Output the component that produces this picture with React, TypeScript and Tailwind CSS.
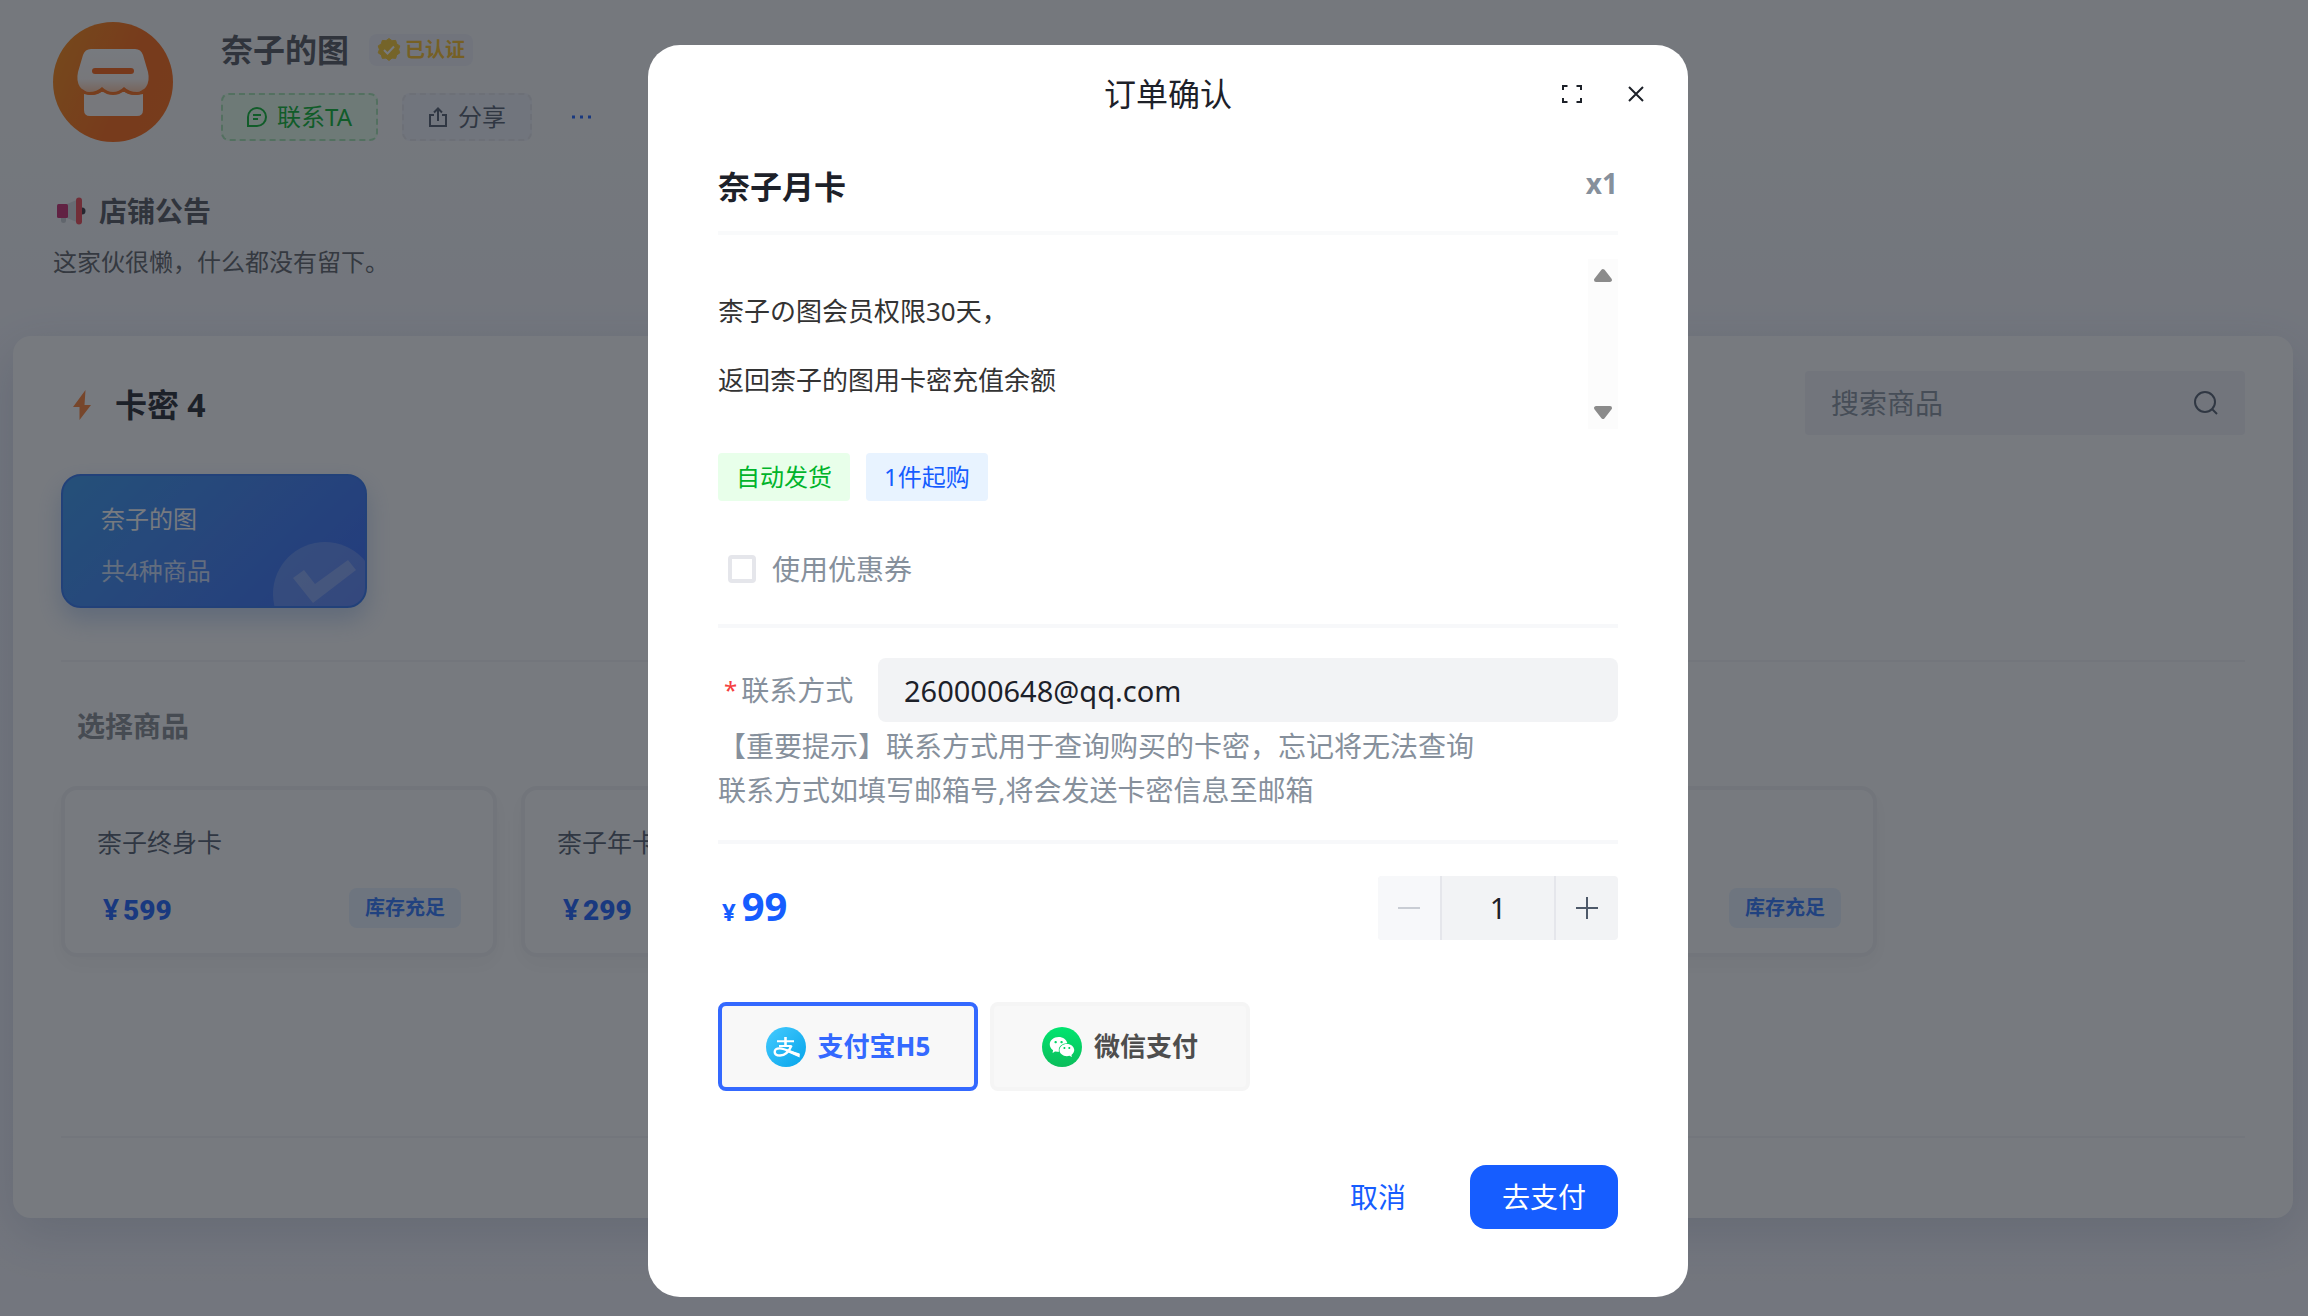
import { useState } from 'react'
import { AiFillWechat } from 'react-icons/ai'

interface Product {
  id: number
  name: string
  price: number
}

const PRODUCTS: Product[] = [
  { id: 1, name: '柰子终身卡', price: 599 },
  { id: 2, name: '柰子年卡', price: 299 },
  { id: 3, name: '柰子季卡', price: 199 },
  { id: 4, name: '柰子月卡', price: 99 },
]

const UNIT_PRICE = 99

function ShopLogo() {
  return (
    <svg viewBox="0 0 120 120" className="h-30 w-30 shrink-0" aria-hidden="true">
      <defs>
        <linearGradient id="logo-bg" x1="0" y1="0.3" x2="1" y2="0.7">
          <stop offset="0" stopColor="#fc8208" />
          <stop offset="0.6" stopColor="#ff6208" />
          <stop offset="1" stopColor="#ff6408" />
        </linearGradient>
        <linearGradient id="logo-roof" x1="0" y1="0" x2="0" y2="1">
          <stop offset="0" stopColor="#ffffff" />
          <stop offset="0.7" stopColor="#fff8f4" />
          <stop offset="1" stopColor="#ffc9a6" />
        </linearGradient>
      </defs>
      <circle cx="60" cy="60" r="60" fill="url(#logo-bg)" />
      <path d="M38 27h44q6 0 8 6l5 17q2 9-2 15-4 5-9 5-8 0-13-5-5 5-11 5t-11-5q-5 5-13 5-5 0-9-5-4-6-2-15l5-17q2-6 8-6z" fill="url(#logo-roof)" />
      <path d="M31 72q11 3 18-3 11 6 22 0 7 6 19 3v16q0 6-6 6H37q-6 0-6-6z" fill="#fffaf7" />
      <path d="M29 68q4 4 9 4 7 0 11-4 5 4 11 4t11-4q4 4 11 4 5 0 9-4" fill="none" stroke="#ff6a10" strokeWidth="2" />
      <rect x="39" y="46" width="42" height="6" rx="3" fill="#ff5d08" />
    </svg>
  )
}

function Megaphone() {
  return (
    <svg viewBox="0 0 30 28" className="h-7 w-[30px]" aria-hidden="true">
      <path d="M4 18h5v6q0 2-2.500 2T4 24z" fill="#c9ccd3" />
      <circle cx="25" cy="14" r="3.500" fill="#35303a" />
      <path d="M10 7l12-5v24l-12-5z" fill="#d8dade" />
      <rect x="0" y="7" width="11" height="14" rx="1.500" fill="#c9246a" />
      <rect x="19" y="0.500" width="6" height="27" rx="3" fill="#f0434f" />
    </svg>
  )
}

function AlipayLogo() {
  return (
    <svg viewBox="0 0 40 40" className="h-10 w-10" aria-hidden="true">
      <defs>
        <linearGradient id="alipay-bg" x1="0" y1="0" x2="1" y2="1">
          <stop offset="0" stopColor="#45cbff" />
          <stop offset="1" stopColor="#06a4ea" />
        </linearGradient>
      </defs>
      <circle cx="20" cy="20" r="20" fill="url(#alipay-bg)" />
      <g fill="none" stroke="#fff" strokeWidth="2">
        <path d="M11 14.200h17M13 19h12.500" />
        <path d="M19.500 10v9" strokeWidth="2.600" />
        <path d="M25.500 18.500c-2.500 6-7 10-11.500 10-3.500 0-5.300-1.500-5.300-3.500 0-2.300 2.300-3.600 5-3.600 5 0 11 3.900 19.600 7" strokeWidth="2.400" />
      </g>
      <path d="M21 22.500l12.600 4.100v4l-14-6.300z" fill="#fff" />
    </svg>
  )
}

function WechatLogo() {
  return (
    <span className="flex h-10 w-10 items-center justify-center rounded-full bg-linear-to-b from-[#00e56f] to-[#0bbd5b] text-white">
      <AiFillWechat className="h-7 w-7" />
    </span>
  )
}

function ShopHeader() {
  return (
    <header className="pl-[53px] pt-[22px]">
      <div className="flex gap-12">
        <ShopLogo />
        <div>
          <div className="flex h-14 items-center gap-5">
            <h1 className="text-[32px] font-bold leading-12 text-[#4e5159]">奈子的图</h1>
            <span className="flex h-8 items-center gap-1 rounded-lg bg-[#eff0f8] px-2 text-xl font-bold leading-8 text-[#fcbe1c]">
              <svg viewBox="0 0 24 24" className="h-6 w-6" aria-hidden="true">
                <path d="M12 0.500l3 2.200 3.700-.3 1 3.500 3.100 2-1.200 3.500 1.200 3.500-3.100 2-1 3.500-3.700-.3-3 2.400-3-2.400-3.700.3-1-3.500-3.100-2 1.200-3.500L1.200 7.900l3.100-2 1-3.500 3.700.3z" fill="#fbc82a" stroke="#fbc82a" strokeLinejoin="round" />
                <path d="M7 12l3.500 3.500L17 8.500" fill="none" stroke="#fff" strokeWidth="2" />
              </svg>
              已认证
            </span>
          </div>
          <div className="mt-[15px] flex items-center">
            <button type="button" className="flex h-12 items-center gap-2.5 rounded-lg border-2 border-dashed border-[#a6e5b1] bg-[#e8ffea] px-6 text-2xl text-[#00b42a]">
              <svg viewBox="0 0 20 20" className="h-5 w-5" fill="none" stroke="currentColor" strokeWidth="2" aria-hidden="true">
                <path d="M1 19v-9a9 9 0 1 1 9 9zM6 8h8M6 12h5" />
              </svg>
              联系TA
            </button>
            <button type="button" className="ml-6 flex h-12 items-center gap-2.5 rounded-lg border-2 border-dashed border-[#e5e6eb] bg-[#f1f2f9] px-6 text-2xl text-[#4e5969]">
              <svg viewBox="0 0 20 20" className="h-5 w-5" fill="none" stroke="currentColor" strokeWidth="2" aria-hidden="true">
                <path d="M6 8H2v11h16V8h-4M10 14V1.500M6 5.500l4-4 4 4" />
              </svg>
              分享
            </button>
            <button type="button" aria-label="更多" className="ml-10 text-[#165dff]">
              <svg viewBox="0 0 20 4" className="h-1 w-5" fill="currentColor" aria-hidden="true">
                <path d="M0 .500h3v3H0zM8 .500h3v3H8zM16 .500h3v3h-3z" />
              </svg>
            </button>
          </div>
        </div>
      </div>
      <h2 className="mt-12 flex h-[42px] items-center gap-3 pl-1 text-[28px] font-bold text-[#4e5159]">
        <Megaphone />
        店铺公告
      </h2>
      <p className="mt-3 text-2xl leading-9 text-[#5a5d63]">这家伙很懒，什么都没有留下。</p>
    </header>
  )
}

function ProductCard({ product }: { product: Product }) {
  return (
    <article className="w-[436px] rounded-2xl border-4 border-[#f2f3f5] bg-white px-8 pb-[25px] pt-[34px] shadow-[0_8px_20px_rgba(0,0,0,0.04)]">
      <h3 className="text-[25px] leading-9 text-[#4e5969]">{product.name}</h3>
      <div className="mt-7 flex h-10 items-center justify-between">
        <p className="flex items-baseline gap-1 pl-1.5 pt-1 font-bold text-[#165dff]">
          <span className="text-[28px] leading-10">¥</span>
          <span className="font-['Roboto',sans-serif] text-[28px] font-black">{product.price}</span>
        </p>
        <span className="rounded-lg bg-[#e8f3ff] px-4 text-xl font-bold leading-10 text-[#2a74ff]">库存充足</span>
      </div>
    </article>
  )
}

function Shop() {
  return (
    <main className="ml-[13px] mr-[15px] mt-14 rounded-[18px] bg-white px-12 pb-20 pt-[35px] shadow-[0_16px_50px_rgba(40,60,110,0.16)]">
      <div className="flex h-16 items-center justify-between">
        <h2 className="flex items-center gap-6 pl-3 pt-1 text-[32px] font-bold text-[#1d2129]">
          <svg viewBox="0 0 18 30" className="h-[30px] w-[18px]" aria-hidden="true">
            <path d="M12.500 0L0 17h6.500v13L18 15h-6.500z" fill="#ff7d2e" />
          </svg>
          卡密 4
        </h2>
        <form role="search" className="flex h-16 w-[440px] items-center rounded bg-[#f2f3f8] px-[26px]" onSubmit={e => e.preventDefault()}>
          <input type="text" aria-label="搜索商品" placeholder="搜索商品" className="min-w-0 flex-1 bg-transparent text-[28px] outline-none placeholder:text-[#86909c]" />
          <button type="submit" aria-label="搜索" className="text-[#4e5969]">
            <svg viewBox="0 0 26 26" className="h-[26px] w-[26px]" fill="none" stroke="currentColor" strokeWidth="2" aria-hidden="true">
              <circle cx="12" cy="12" r="10" />
              <path d="M19 19l5 5" />
            </svg>
          </button>
        </form>
      </div>

      <button type="button" className="relative mt-[39px] block h-[134px] w-[306px] overflow-hidden rounded-[20px] border-2 border-[#2b72f0] bg-linear-135 from-[#3296f0] via-[#377cf6] to-[#2f62fa] pl-[38px] pt-2 text-left text-2xl leading-9 text-white shadow-[0_12px_24px_rgba(60,120,210,0.3)]">
        <span className="block">奈子的图</span>
        <span className="mt-4 block text-white/75">共4种商品</span>
        <svg viewBox="0 0 104 104" className="absolute -bottom-10 -right-3 h-26 w-26" aria-hidden="true">
          <circle cx="52" cy="52" r="52" fill="#fff" fillOpacity="0.2" />
          <path d="M20 36l11-8 11 14 33-24 8 10-43 33z" fill="#fff" fillOpacity="0.25" />
        </svg>
      </button>

      <div className="mt-[52px] h-0.5 bg-[#f5f6f7]" />
      <h2 className="mt-11 pl-4 text-[28px] font-bold leading-10 text-[#86898f]">选择商品</h2>
      <div className="mt-10 flex flex-wrap gap-6">
        {PRODUCTS.map(product => (
          <ProductCard key={product.id} product={product} />
        ))}
      </div>
      <div className="mt-[179px] h-0.5 bg-[#f5f6f7]" />
    </main>
  )
}

function OrderDialog() {
  const [contact, setContact] = useState('260000648@qq.com')
  const [coupon, setCoupon] = useState(false)
  const [count, setCount] = useState(1)
  const [channel, setChannel] = useState('alipay')

  const channels = [
    { id: 'alipay', label: '支付宝H5', logo: <AlipayLogo /> },
    { id: 'wechat', label: '微信支付', logo: <WechatLogo /> },
  ]

  return (
    <section role="dialog" aria-modal="true" aria-labelledby="order-title" className="w-[1040px] rounded-[32px] bg-white pb-[68px]">
      <div className="grid h-[98px] grid-cols-[1fr_auto_1fr] items-center">
        <h2 id="order-title" className="col-start-2 text-[32px] leading-12 text-[#1d2129]">订单确认</h2>
        <div className="flex justify-end gap-8 pr-9 text-[#1d2129]">
          <button type="button" aria-label="全屏" className="flex h-8 w-8 items-center justify-center">
            <svg viewBox="0 0 20 20" className="h-5 w-5" fill="none" stroke="currentColor" strokeWidth="2" aria-hidden="true">
              <path d="M1 6V2h4.500M14.500 2H19v4M19 14v4h-4.500M5.500 18H1v-4" />
            </svg>
          </button>
          <button type="button" aria-label="关闭" className="flex h-8 w-8 items-center justify-center">
            <svg viewBox="0 0 16 16" className="h-4 w-4" fill="none" stroke="currentColor" strokeWidth="2" aria-hidden="true">
              <path d="M1 1l14 14M15 1L1 15" />
            </svg>
          </button>
        </div>
      </div>

      <div className="px-[70px]">
        <div className="flex h-[88px] items-center justify-between font-bold">
          <h3 className="text-[32px] leading-12 text-[#1d2129]">奈子月卡</h3>
          <span className="pb-2 text-[28px] text-[#86909c]">x1</span>
        </div>
        <div className="h-1 bg-[#f9fafb]" />

        <div className="mt-6 flex h-[170px] justify-between">
          <div className="flex flex-col gap-6 pt-[30px] text-[26px] leading-[45px] text-[#333333]">
            <p>柰子の图会员权限30天，</p>
            <p>返回柰子的图用卡密充值余额</p>
          </div>
          <div className="flex w-[30px] flex-col items-center justify-between bg-[#fcfcfc] py-2">
            <svg viewBox="0 0 20 16" className="h-4 w-5" fill="#8b8b8b" stroke="#8b8b8b" strokeWidth="4" strokeLinejoin="round" aria-hidden="true">
              <path d="M10 4l7 9H3z" />
            </svg>
            <svg viewBox="0 0 20 16" className="h-4 w-5" fill="#8b8b8b" stroke="#8b8b8b" strokeWidth="4" strokeLinejoin="round" aria-hidden="true">
              <path d="M10 12L3 3h14z" />
            </svg>
          </div>
        </div>

        <div className="mt-6 flex gap-4 text-2xl leading-12">
          <span className="rounded bg-[#e8ffea] px-[18px] text-[#00b42a]">自动发货</span>
          <span className="rounded bg-[#e8f3ff] px-[18px] text-[#165dff]">1件起购</span>
        </div>

        <label className="mt-11 flex h-12 items-center gap-4 pl-2.5 text-[28px] text-[#86909c]">
          <input
            type="checkbox"
            checked={coupon}
            onChange={e => setCoupon(e.target.checked)}
            className="h-7 w-7 appearance-none rounded border-4 border-[#e5e6eb] bg-white checked:border-[#165dff] checked:bg-[#165dff]"
          />
          使用优惠券
        </label>
        <div className="mt-[31px] h-1 bg-[#f7f8fa]" />

        <div className="mt-[30px] flex items-center">
          <label htmlFor="contact" className="flex w-40 items-center gap-1 pl-1.5 text-[28px] text-[#86909c]">
            <span className="text-2xl text-[#f53f3f]">*</span>
            联系方式
          </label>
          <input
            id="contact"
            type="text"
            value={contact}
            onChange={e => setContact(e.target.value)}
            className="h-16 min-w-0 flex-1 rounded-lg bg-[#f2f3f5] px-[26px] text-[29px] text-[#1d2129] outline-none"
          />
        </div>
        <p className="mt-0.5 text-[28px] leading-11 text-[#86909c]">
          【重要提示】联系方式用于查询购买的卡密，忘记将无法查询
          <br />
          联系方式如填写邮箱号,将会发送卡密信息至邮箱
        </p>
        <div className="mt-7 h-1 bg-[#f7f8fa]" />

        <div className="mt-8 flex items-center justify-between">
          <p className="flex items-baseline gap-1.5 pb-1 pl-1 font-bold text-[#165dff]">
            <span className="text-2xl">¥</span>
            <span className="text-[40px] leading-12">{UNIT_PRICE * count}</span>
          </p>
          <div className="flex h-16 overflow-hidden rounded bg-[#f2f3f5] text-[#4e5969]">
            <button
              type="button"
              aria-label="减少"
              disabled={count <= 1}
              onClick={() => setCount(c => c - 1)}
              className="flex w-16 items-center justify-center border-r-2 border-[#e5e6eb] disabled:bg-[#f7f8fa] disabled:text-[#c9cdd4]"
            >
              <svg viewBox="0 0 22 22" className="h-[22px] w-[22px]" stroke="currentColor" strokeWidth="2" aria-hidden="true">
                <path d="M0 11h22" />
              </svg>
            </button>
            <input
              type="text"
              inputMode="numeric"
              aria-label="数量"
              value={count}
              onChange={e => setCount(Math.max(1, Number(e.target.value) || 1))}
              className="w-28 bg-transparent text-center text-[29px] text-[#1d2129] outline-none"
            />
            <button type="button" aria-label="增加" onClick={() => setCount(c => c + 1)} className="flex w-16 items-center justify-center border-l-2 border-[#e5e6eb]">
              <svg viewBox="0 0 22 22" className="h-[22px] w-[22px]" stroke="currentColor" strokeWidth="2" aria-hidden="true">
                <path d="M0 11h22M11 0v22" />
              </svg>
            </button>
          </div>
        </div>

        <div role="radiogroup" aria-label="支付方式" className="mt-[62px] flex gap-3">
          {channels.map(item => (
            <label
              key={item.id}
              className="flex h-[89px] w-[260px] cursor-pointer items-center justify-center gap-3 rounded-lg border-4 border-[#f5f5f5] bg-[#f8f8f8] text-[26px] font-bold text-[#4e4e4e] has-checked:border-[#3469ff] has-checked:text-[#3469ff]"
            >
              <input type="radio" name="channel" value={item.id} checked={channel === item.id} onChange={() => setChannel(item.id)} className="sr-only" />
              {item.logo}
              {item.label}
            </label>
          ))}
        </div>

        <div className="mt-[74px] flex items-center justify-end gap-8 text-[28px]">
          <button type="button" className="h-16 px-8 text-[#165dff]">取消</button>
          <button type="button" className="h-16 rounded-2xl bg-[#165dff] px-8 text-white">去支付</button>
        </div>
      </div>
    </section>
  )
}

export default function App() {
  return (
    <div className="min-h-screen bg-linear-to-b from-[#f9fafb] from-10% via-[#f2f3fb] via-30% to-[#f5f5fc] pb-[98px] font-['Noto_Sans','Noto_Sans_CJK_SC',sans-serif]" lang="zh-CN">
      <ShopHeader />
      <Shop />
      <div className="fixed inset-0 flex items-start justify-center overflow-hidden bg-[rgba(29,33,41,0.6)] pl-7 pt-[45px]">
        <OrderDialog />
      </div>
    </div>
  )
}
